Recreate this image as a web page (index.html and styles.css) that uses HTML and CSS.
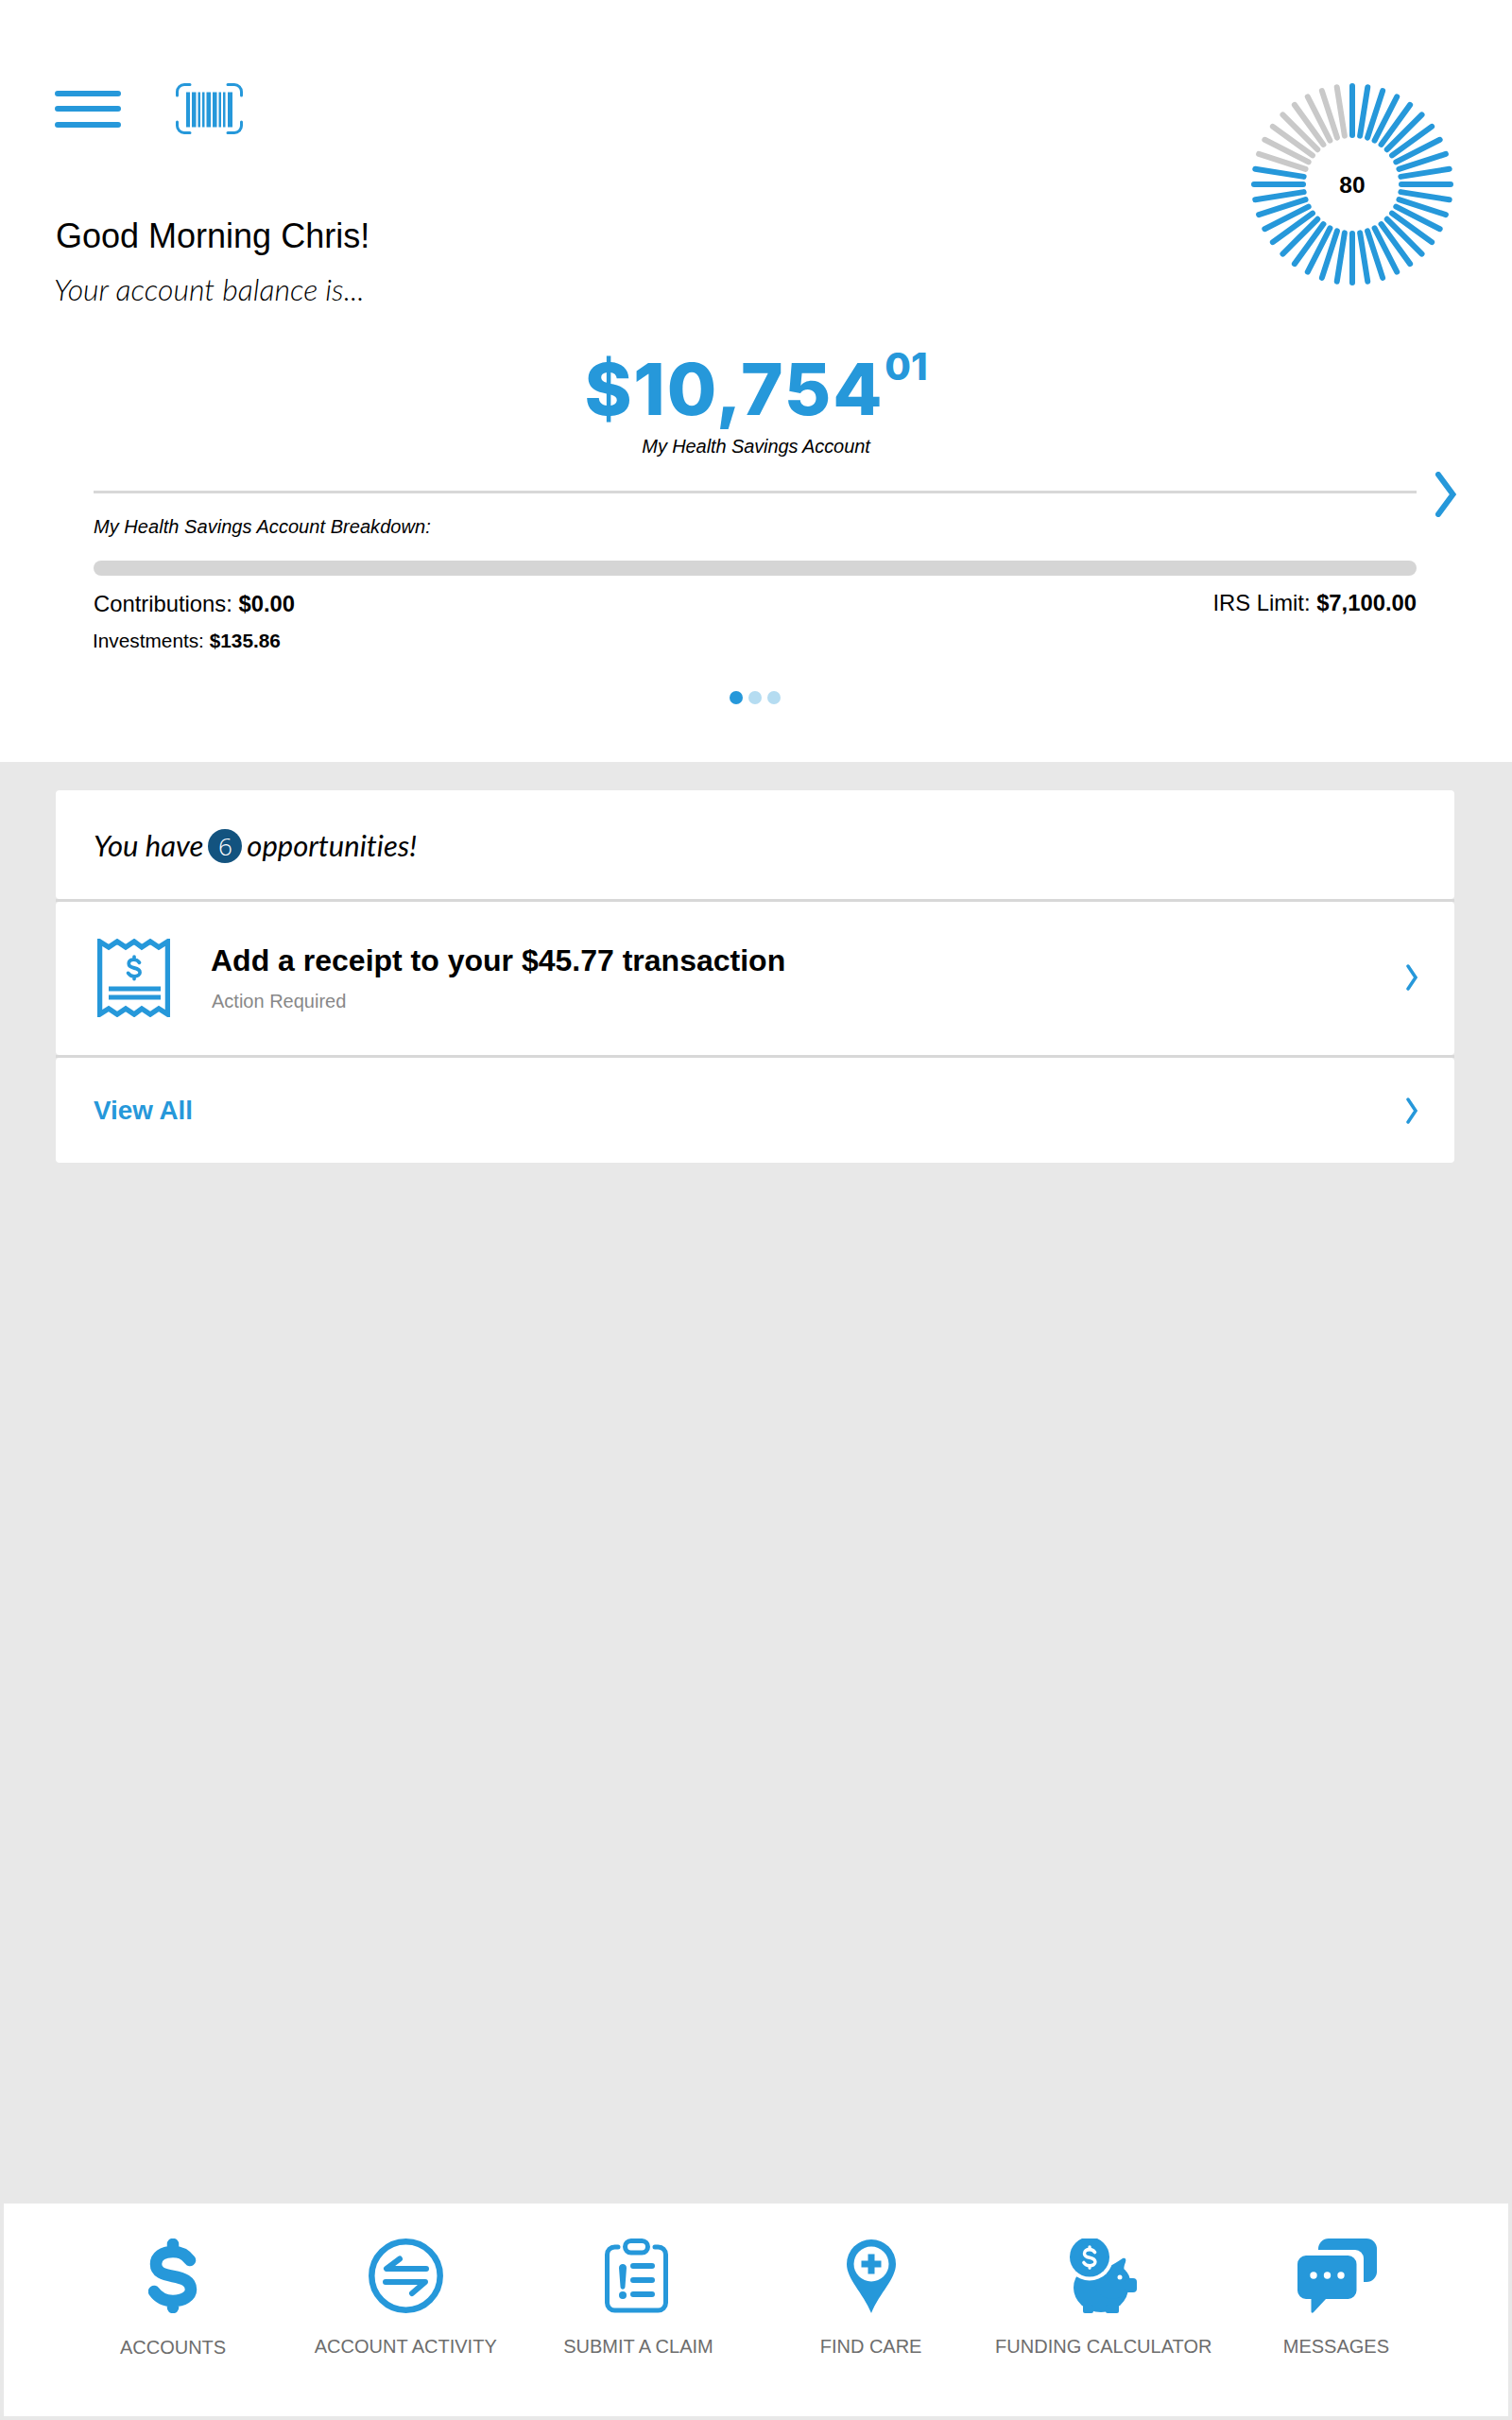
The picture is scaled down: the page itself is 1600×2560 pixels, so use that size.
FILE: index.html
```html
<!DOCTYPE html>
<html lang="en">
<head>
<meta charset="utf-8">
<title>Dashboard</title>
<link rel="stylesheet" href="styles.css">
</head>
<body>
<div class="page">
  <header class="header">
    <div class="top">
      <div class="intro">
        <div class="tools">
          <svg class="ico-menu" width="70" height="54" viewBox="0 0 70 54"><path d="M3 11H67M3 27H67M3 44H67" class="st-blue" stroke-width="6"/></svg>
          <svg class="ico-scan" width="71" height="54" viewBox="0 0 71 54">
            <path class="st-blue" stroke-width="3" d="M1.500 13V9A7.500 7.500 0 0 1 9 1.500H15M55 1.500H62A7.500 7.500 0 0 1 69.500 9V13M1.500 41V45A7.500 7.500 0 0 0 9 52.500H15M55 52.500H62A7.500 7.500 0 0 0 69.500 45V41"/>
            <path class="fl-blue" d="M11 9.500h4v37h-4zM17 9.500h4.500v37H17zM23.500 9.500H26v37h-2.500zM28 9.500h2.500v37H28zM32.500 9.500H37v37h-4.500zM39 9.500h4.500v37H39zM45.500 9.500H48v37h-2.500zM50 9.500h2.500v37H50zM55 9.500h5v37h-5z"/>
          </svg>
        </div>
        <h1 class="greeting">Good Morning Chris!</h1>
        <p class="lead">Your account balance is...</p>
      </div>
      <svg class="gauge" width="220" height="220" viewBox="0 0 220 220">
        <g class="st-blue" stroke-width="6">
          <line x1="110" y1="6" x2="110" y2="58"/>
          <line x1="110" y1="6" x2="110" y2="58" transform="rotate(9 110 110)"/>
          <line x1="110" y1="6" x2="110" y2="58" transform="rotate(18 110 110)"/>
          <line x1="110" y1="6" x2="110" y2="58" transform="rotate(27 110 110)"/>
          <line x1="110" y1="6" x2="110" y2="58" transform="rotate(36 110 110)"/>
          <line x1="110" y1="6" x2="110" y2="58" transform="rotate(45 110 110)"/>
          <line x1="110" y1="6" x2="110" y2="58" transform="rotate(54 110 110)"/>
          <line x1="110" y1="6" x2="110" y2="58" transform="rotate(63 110 110)"/>
          <line x1="110" y1="6" x2="110" y2="58" transform="rotate(72 110 110)"/>
          <line x1="110" y1="6" x2="110" y2="58" transform="rotate(81 110 110)"/>
          <line x1="110" y1="6" x2="110" y2="58" transform="rotate(90 110 110)"/>
          <line x1="110" y1="6" x2="110" y2="58" transform="rotate(99 110 110)"/>
          <line x1="110" y1="6" x2="110" y2="58" transform="rotate(108 110 110)"/>
          <line x1="110" y1="6" x2="110" y2="58" transform="rotate(117 110 110)"/>
          <line x1="110" y1="6" x2="110" y2="58" transform="rotate(126 110 110)"/>
          <line x1="110" y1="6" x2="110" y2="58" transform="rotate(135 110 110)"/>
          <line x1="110" y1="6" x2="110" y2="58" transform="rotate(144 110 110)"/>
          <line x1="110" y1="6" x2="110" y2="58" transform="rotate(153 110 110)"/>
          <line x1="110" y1="6" x2="110" y2="58" transform="rotate(162 110 110)"/>
          <line x1="110" y1="6" x2="110" y2="58" transform="rotate(171 110 110)"/>
          <line x1="110" y1="6" x2="110" y2="58" transform="rotate(180 110 110)"/>
          <line x1="110" y1="6" x2="110" y2="58" transform="rotate(189 110 110)"/>
          <line x1="110" y1="6" x2="110" y2="58" transform="rotate(198 110 110)"/>
          <line x1="110" y1="6" x2="110" y2="58" transform="rotate(207 110 110)"/>
          <line x1="110" y1="6" x2="110" y2="58" transform="rotate(216 110 110)"/>
          <line x1="110" y1="6" x2="110" y2="58" transform="rotate(225 110 110)"/>
          <line x1="110" y1="6" x2="110" y2="58" transform="rotate(234 110 110)"/>
          <line x1="110" y1="6" x2="110" y2="58" transform="rotate(243 110 110)"/>
          <line x1="110" y1="6" x2="110" y2="58" transform="rotate(252 110 110)"/>
          <line x1="110" y1="6" x2="110" y2="58" transform="rotate(261 110 110)"/>
          <line x1="110" y1="6" x2="110" y2="58" transform="rotate(270 110 110)"/>
          <line x1="110" y1="6" x2="110" y2="58" transform="rotate(279 110 110)"/>
        </g>
        <g class="st-gray" stroke-width="6">
          <line x1="110" y1="6" x2="110" y2="58" transform="rotate(288 110 110)"/>
          <line x1="110" y1="6" x2="110" y2="58" transform="rotate(297 110 110)"/>
          <line x1="110" y1="6" x2="110" y2="58" transform="rotate(306 110 110)"/>
          <line x1="110" y1="6" x2="110" y2="58" transform="rotate(315 110 110)"/>
          <line x1="110" y1="6" x2="110" y2="58" transform="rotate(324 110 110)"/>
          <line x1="110" y1="6" x2="110" y2="58" transform="rotate(333 110 110)"/>
          <line x1="110" y1="6" x2="110" y2="58" transform="rotate(342 110 110)"/>
          <line x1="110" y1="6" x2="110" y2="58" transform="rotate(351 110 110)"/>
        </g>
        <text class="gauge-num" x="110" y="119" text-anchor="middle">80</text>
      </svg>
    </div>

    <div class="balance">$10,754<span class="cents">01</span></div>
    <div class="acct">My Health Savings Account</div>

    <div class="rule-row">
      <div class="rule"></div>
      <svg class="chev-big" width="22" height="48" viewBox="0 0 22 48"><path class="st-blue" stroke-width="6" stroke-linejoin="miter" d="M3 3L18.500 24L3 45"/></svg>
    </div>
    <div class="breakdown">
      <div class="bd-title">My Health Savings Account Breakdown:</div>
      <div class="bar"></div>
      <div class="bd-row"><span class="bd-left">Contributions: <b>$0.00</b></span><span>IRS Limit: <b>$7,100.00</b></span></div>
      <div class="bd-small">Investments: <b>$135.86</b></div>
    </div>
    <div class="dots"><span class="dot on"></span><span class="dot"></span><span class="dot"></span></div>
  </header>

  <main class="main">
    <section class="card">
      <div class="row row-head">
        <span class="opp">You have</span><span class="badge">6</span><span class="opp">opportunities!</span>
      </div>
      <div class="divider"></div>
      <div class="row row-task">
        <svg class="ico-receipt" width="77" height="83" viewBox="0 0 77 83">
          <path class="st-blue sq" stroke-width="5.500" d="M2.500 3L12 9L21 3L30 9L39 3L47 9L56 3L65 9L74.500 3V80L65 74L56 80L47 74L39 80L30 74L21 80L12 74L2.500 80Z"/>
          <g transform="translate(30.700 17.400) scale(.32 .34)"><path class="st-blue" stroke-width="11.500" d="M43 23C37 15 31 14 25 14C14 14 8 19 8 27C8 36 16 38 26 40C37 42 45 45 45 54C45 61 37 66 26 66C18 66 11 63 6 56M26 5V14M26 66V74"/></g>
          <path class="st-blue butt" stroke-width="5" d="M12 53H67M12 62H67"/>
        </svg>
        <div class="task-text">
          <div class="task-title">Add a receipt to your $45.77 transaction</div>
          <div class="task-sub">Action Required</div>
        </div>
        <svg class="chev" width="12" height="28" viewBox="0 0 12 28"><path class="st-blue" stroke-width="3.500" stroke-linejoin="miter" d="M2 2L10 14L2 26"/></svg>
      </div>
      <div class="divider"></div>
      <div class="row row-all">
        <span class="view-all">View All</span>
        <svg class="chev" width="12" height="28" viewBox="0 0 12 28"><path class="st-blue" stroke-width="3.500" stroke-linejoin="miter" d="M2 2L10 14L2 26"/></svg>
      </div>
    </section>
  </main>

  <nav class="nav">
    <a class="nav-item first">
      <span class="nav-ico"><svg width="52" height="79" viewBox="0 0 52 79"><path class="st-blue" stroke-width="12.500" d="M44 23C38 15 32 14 26 14C15 14 8 19 8 27C8 36 16 38 26 40C37 42 45 45 45 54C45 61 37 66 26 66C18 66 11 63 6 56M26 6V14M26 66V73"/></svg></span>
      <span class="nav-label">ACCOUNTS</span>
    </a>
    <a class="nav-item">
      <span class="nav-ico"><svg width="79" height="79" viewBox="0 0 79 79"><circle class="st-blue" stroke-width="6.500" cx="39.500" cy="39.500" r="36.200"/><path class="st-blue" stroke-width="6" stroke-linejoin="round" d="M33 21.500L19 32H61M18 46H60L46 58"/></svg></span>
      <span class="nav-label">ACCOUNT ACTIVITY</span>
    </a>
    <a class="nav-item">
      <span class="nav-ico ico-claim"><svg width="67" height="79" viewBox="0 0 67 79">
        <path class="st-blue" stroke-width="5" d="M14 9H10.500A8 8 0 0 0 2.500 17V68A8 8 0 0 0 10.500 76H56.500A8 8 0 0 0 64.500 68V17A8 8 0 0 0 56.500 9H53"/>
        <rect class="st-blue" stroke-width="5" x="21.500" y="2.500" width="24" height="12.500" rx="6.200"/>
        <path class="st-blue" stroke-width="6" d="M30 29H50M30 44H50M30 59H50"/>
        <path class="fl-blue" d="M15 31C15 25.500 23 25.500 23 31L21.500 51C21.300 54.500 16.700 54.500 16.500 51Z"/>
        <circle class="fl-blue" cx="19" cy="60" r="4"/>
      </svg></span>
      <span class="nav-label">SUBMIT A CLAIM</span>
    </a>
    <a class="nav-item">
      <span class="nav-ico"><svg width="52" height="78" viewBox="0 0 52 78">
        <path class="fl-blue" d="M26 0A26 26 0 0 1 52 26C52 42 35 56 26 78C17 56 0 42 0 26A26 26 0 0 1 26 0Z"/>
        <circle class="fl-white" cx="26" cy="26" r="18.500"/>
        <path class="fl-blue" d="M22.500 15.500h7v7h7v7h-7v7h-7v-7h-7v-7h7z"/>
      </svg></span>
      <span class="nav-label">FIND CARE</span>
    </a>
    <a class="nav-item">
      <span class="nav-ico"><svg width="71" height="79" viewBox="0 0 71 79">
        <path class="fl-blue" d="M39 31C46 28 51 24 56 21C59 20 60 22 59 25C58 28 57 30 57.500 33L52 42Z"/>
        <ellipse class="fl-blue" cx="33" cy="52" rx="29" ry="26"/>
        <ellipse class="fl-blue" cx="45" cy="46" rx="19" ry="18"/>
        <rect class="fl-blue" x="58" y="42" width="13" height="15" rx="4"/>
        <rect class="fl-blue" x="14" y="70" width="11" height="9" rx="2"/>
        <rect class="fl-blue" x="38" y="70" width="14" height="9" rx="2"/>
        <circle class="fl-white" cx="53" cy="41" r="2.500"/>
        <circle class="fl-white" cx="21" cy="19.500" r="25"/>
        <circle class="fl-blue" cx="21" cy="19.500" r="21"/>
        <g transform="translate(13 7) scale(.31 .33)"><path class="st-white" stroke-width="11" d="M44 23C38 15 32 14 26 14C15 14 8 19 8 27C8 36 16 38 26 40C37 42 45 45 45 54C45 61 37 66 26 66C18 66 11 63 6 56M26 6V14M26 66V73"/></g>
      </svg></span>
      <span class="nav-label">FUNDING CALCULATOR</span>
    </a>
    <a class="nav-item">
      <span class="nav-ico ico-msg"><svg width="84" height="79" viewBox="0 0 84 79">
        <rect class="fl-blue" x="22" y="0" width="62" height="46" rx="11"/>
        <rect class="fl-white" x="4" y="12" width="66" height="56" rx="9"/>
        <path class="fl-blue" d="M9 18H53.500A9 9 0 0 1 62.500 27V55A9 9 0 0 1 53.500 64H30L17 78C15.500 79.500 14.500 78.500 14.500 77V64H9A9 9 0 0 1 0 55V27A9 9 0 0 1 9 18Z"/>
        <circle class="fl-white" cx="17" cy="39" r="3.700"/><circle class="fl-white" cx="31.500" cy="39" r="3.700"/><circle class="fl-white" cx="46" cy="39" r="3.700"/>
      </svg></span>
      <span class="nav-label">MESSAGES</span>
    </a>
  </nav>
</div>
</body>
</html>
```
FILE: styles.css
```css
* { box-sizing: border-box; }
html, body { margin: 0; padding: 0; }
body { font-family: "Liberation Sans", Arial, sans-serif; color: #000; background: #e8e8e8; }
.page { display: flex; flex-direction: column; height: 2560px; }

.st-blue { fill: none; stroke: #2698da; stroke-linecap: round; }
.st-gray { fill: none; stroke: #c9c9c9; stroke-linecap: round; }
.st-white { fill: none; stroke: #fff; stroke-linecap: round; }
.fl-blue { fill: #2698da; }
.fl-white { fill: #fff; }
.sq { stroke-linejoin: miter; stroke-linecap: butt; }
.butt { stroke-linecap: butt; }

.header { height: 806px; background: #fff; flex: none; }
.top { display: flex; justify-content: space-between; align-items: flex-start; height: 366px; padding: 85px 59px 0 58px; }
.tools { display: flex; gap: 58px; margin-top: 3px; }
.tools svg { display: block; }
.greeting { margin: 85.500px 0 0 1px; font-size: 36px; line-height: 44px; font-weight: 400; }
.lead { margin: 14px 0 0 -1px; font-family: Lato, sans-serif; font-style: italic; font-weight: 300; font-size: 32px; line-height: 40px; color: #000; }
.gauge { display: block; }
.gauge-num { font-family: "Liberation Sans", Arial, sans-serif; font-weight: 700; font-size: 24.500px; fill: #000; }

.balance { text-align: center; font-family: Inter, sans-serif; font-weight: 800; font-size: 76px; line-height: 90px; color: #2698da; letter-spacing: 1.800px; }
.cents { font-size: 40px; font-weight: 800; line-height: 0; vertical-align: 37px; letter-spacing: 0; margin-left: 1px; }
.acct { margin-top: 4px; text-align: center; font-style: italic; font-size: 20px; line-height: 24px; letter-spacing: -0.1px; }

.rule-row { display: flex; align-items: center; gap: 20px; height: 48px; margin-top: 15px; padding-left: 99px; }
.rule { width: 1400px; height: 3px; margin-top: -5px; background: #d8d8d8; }
.chev-big { display: block; flex: none; }

.breakdown { padding: 0 101px 0 99px; }
.bd-title { font-style: italic; font-size: 20px; line-height: 20px; letter-spacing: 0.05px; }
.bar { height: 16px; margin-top: 26px; border-radius: 8px; background: #d5d5d5; }
.bd-row { display: flex; justify-content: space-between; margin-top: 15px; font-size: 23.800px; line-height: 28px; }
.bd-left { margin-top: 1px; }
.bd-small { margin: 13px 0 0 -1px; font-size: 20.800px; line-height: 24px; }

.dots { display: flex; justify-content: center; gap: 6px; margin-top: 41px; padding-right: 3px; }
.dot { width: 14px; height: 14px; border-radius: 50%; background: #b5dcf1; }
.dot.on { background: #2698da; }

.main { flex: 1; padding: 30px 61px 0 59px; }
.card { display: flex; flex-direction: column; }
.divider { height: 3px; background: #d8d8d8; }
.row { display: flex; align-items: center; background: #fff; border-radius: 4px; }
.row-head { height: 115px; padding-left: 40px; gap: 5px; }
.opp { font-family: Lato, sans-serif; font-style: italic; font-size: 31px; font-variant-ligatures: none; }
.badge { width: 36px; height: 36px; margin-top: 2px; border-radius: 50%; background: #13537f; color: #fff; display: flex; align-items: center; justify-content: center; font-family: "Open Sans", sans-serif; font-weight: 300; font-size: 26px; }
.row-task { height: 162px; padding: 0 39px 2px 44px; gap: 43px; }
.ico-receipt { flex: none; display: block; }
.task-text { flex: 1; }
.task-title { font-weight: 700; font-size: 32px; line-height: 38px; }
.task-sub { margin: 12px 0 0 1px; font-size: 20px; line-height: 24px; color: #888; }
.chev { display: block; flex: none; }
.row-all { height: 111px; padding: 0 39px 0 40px; justify-content: space-between; }
.view-all { font-weight: 700; font-size: 27.800px; color: #2698da; }

.nav { flex: none; display: grid; grid-template-columns: repeat(6, 1fr); height: 225px; margin: 0 4px 4px; padding: 37px 59px 0 56px; background: #fff; }
.nav-item { display: flex; flex-direction: column; align-items: center; }
.nav-ico { height: 79px; display: flex; align-items: center; justify-content: center; }
.nav-ico svg { display: block; }
.ico-claim { margin-left: -3px; }
.ico-msg { margin-left: 2px; }
.nav-label { margin-top: 23px; font-size: 20px; line-height: 24px; color: #6d6d6d; white-space: nowrap; }
.first .nav-label { margin-top: 24px; }
```
